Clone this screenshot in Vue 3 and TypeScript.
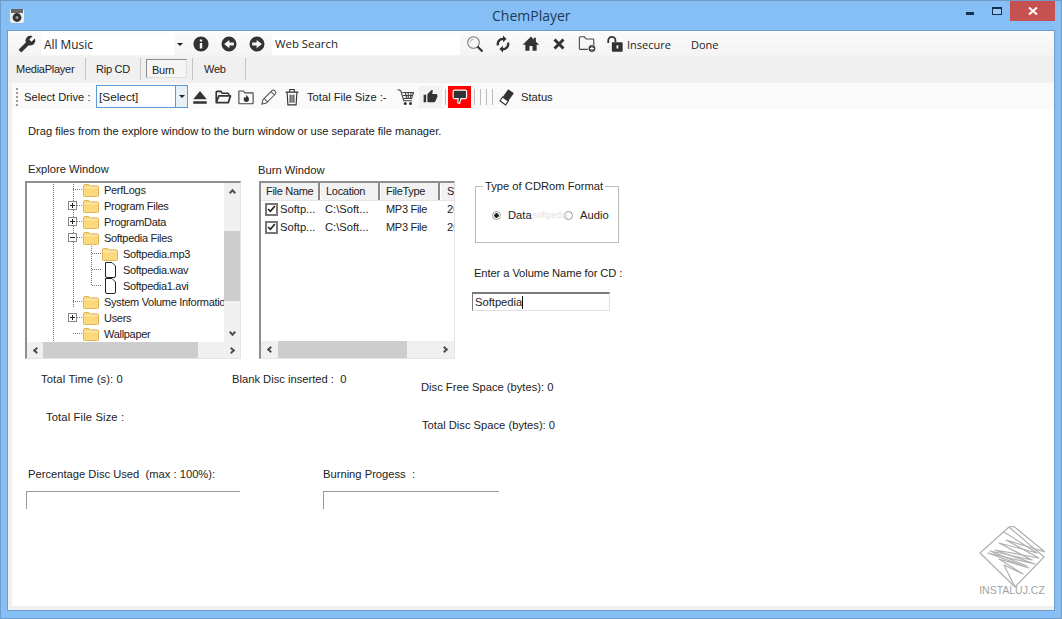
<script setup lang="ts">
const tree = [
  { label: 'PerfLogs', level: 1, icon: 'folder', exp: '' },
  { label: 'Program Files', level: 1, icon: 'folder', exp: '+' },
  { label: 'ProgramData', level: 1, icon: 'folder', exp: '+' },
  { label: 'Softpedia Files', level: 1, icon: 'folder', exp: '-' },
  { label: 'Softpedia.mp3', level: 2, icon: 'folder', exp: '' },
  { label: 'Softpedia.wav', level: 2, icon: 'file', exp: '' },
  { label: 'Softpedia1.avi', level: 2, icon: 'file', exp: '' },
  { label: 'System Volume Information', level: 1, icon: 'folder', exp: '' },
  { label: 'Users', level: 1, icon: 'folder', exp: '+' },
  { label: 'Wallpaper', level: 1, icon: 'folder', exp: '' }
]
const columns = ['File Name', 'Location', 'FileType', 'Si']
const files = [
  { name: 'Softp...', loc: 'C:\\Soft...', type: 'MP3 File', size: '20' },
  { name: 'Softp...', loc: 'C:\\Soft...', type: 'MP3 File', size: '20' }
]
</script>

<template>
  <div class="window">
    <header class="titlebar">
      <svg class="appicon" viewBox="0 0 16 16">
        <rect x="1" y="1" width="14" height="14" rx="2" fill="#eee" />
        <rect x="2" y="1" width="12" height="4" fill="#666" />
        <circle cx="8" cy="9.5" r="4.4" fill="#333" />
        <circle cx="8" cy="9.5" r="1.6" fill="#999" />
      </svg>
      <span class="title">ChemPlayer</span>
      <div class="winbtns">
        <span class="min"></span>
        <span class="max"></span>
        <span class="close">
          <svg viewBox="0 0 10 10" width="10" height="10"><path d="M1 1.500l8 7M9 1.500l-8 7" stroke="#fff" stroke-width="2" /></svg>
        </span>
      </div>
    </header>

    <main class="client">
      <div class="navbar">
        <svg class="ic wrench" viewBox="0 0 24 24"><path transform="matrix(-1 0 0 1 24 0)" d="M22.700 19l-9.100-9.100c.9-2.300.4-5-1.500-6.900-2-2-5-2.400-7.400-1.300L9 6 6 9 1.600 4.700C.4 7.100.9 10.100 2.900 12.100c1.900 1.900 4.600 2.400 6.900 1.500l9.100 9.100c.4.4 1 .4 1.400 0l2.300-2.300c.5-.4.5-1.100.1-1.400z" /></svg>
        <div class="navcombo"><span>All Music</span><i class="drop"></i></div>
        <svg class="ic nav-i" viewBox="0 0 24 24"><path d="M12 2C6.480 2 2 6.480 2 12s4.480 10 10 10 10-4.480 10-10S17.520 2 12 2zm1.600 16h-3.200v-7.500h3.200V18zm0-9.500h-3.200V6h3.200v2.500z" /></svg>
        <svg class="ic nav-i" viewBox="0 0 24 24"><path fill-rule="evenodd" d="M12 2a10 10 0 1 0 0 20 10 10 0 0 0 0-20zm.5 4.500v3.600h6v3.800h-6v3.600L5.500 12z" /></svg>
        <svg class="ic nav-i" viewBox="0 0 24 24"><path fill-rule="evenodd" d="M12 2a10 10 0 1 0 0 20 10 10 0 0 0 0-20zm-.5 4.500l7 5.500-7 5.500v-3.600h-6v-3.800h6z" /></svg>
        <div class="websearch">Web Search</div>
        <svg class="ic tool search" viewBox="0 0 18 18"><circle cx="7.500" cy="7.500" r="5.800" fill="none" stroke="#777" stroke-width="1.100" /><path d="M4.500 7a3 3 0 0 1 3-3" fill="none" stroke="#aaa" /><path d="M11.500 11.500l5 5" stroke="#333" stroke-width="2.200" /></svg>
        <svg class="ic tool" viewBox="0 0 24 24"><path d="M12 3.500a8.500 8.500 0 0 0-8.200 10.700l3-1A5.400 5.400 0 0 1 12 6.600V9.600l4.800-4.400L12 .8zM20.200 9.800l-3 1A5.400 5.400 0 0 1 12 17.400V14.400l-4.800 4.400 4.800 4.400V20.500A8.500 8.500 0 0 0 20.200 9.800z" /></svg>
        <svg class="ic tool" viewBox="0 0 24 24"><path d="M10 21v-6.500h4V21h5.500v-8H23L18.500 9V3.500h-3v2.800L12 2 1 13h3.500v8z" /></svg>
        <svg class="ic tool" viewBox="0 0 24 24"><path d="M6 6l12 12M18 6L6 18" stroke="#333" stroke-width="4" /></svg>
        <svg class="ic tool" viewBox="0 0 20 20"><path d="M11 16H2.500a1 1 0 0 1-1-1V3a1 1 0 0 1 1-1h4.500l2 2.500h7.500a1 1 0 0 1 1 1V11" fill="none" stroke="#444" stroke-width="1.200" /><circle cx="15.500" cy="15" r="3.800" fill="#444" /><path d="M15.500 12.800v4.400M13.300 15h4.400" stroke="#fff" stroke-width="1.200" /></svg>
        <svg class="ic tool" viewBox="0 0 20 20"><path d="M2.500 9V6a4 4 0 0 1 8 0v2" fill="none" stroke="#333" stroke-width="2" /><rect x="6.500" y="8" width="12" height="10.500" rx="1" fill="#333" /><rect x="11.700" y="11.500" width="2" height="3.500" fill="#fff" /></svg>
        <span class="insecure">Insecure</span>
        <span class="done">Done</span>
      </div>

      <div class="tabs">
        <span class="tab t1">MediaPlayer</span><i class="vsep"></i>
        <span class="tab t2">Rip CD</span><i class="vsep"></i>
        <span class="tab t3"><span class="active">Burn</span></span><i class="vsep"></i>
        <span class="tab t4">Web</span><i class="vsep"></i>
      </div>

      <div class="burnbar">
        <i class="grip"></i>
        <span class="sel-label">Select Drive :</span>
        <div class="drivecombo"><span>[Select]</span><b><i class="drop"></i></b></div>
        <svg class="ic b" viewBox="0 0 24 24"><path d="M3 17.500h18v3.500H3zM12 4l9 11H3z" /></svg>
        <svg class="ic b" viewBox="0 0 24 24"><path d="M3 19.500V5.500a1 1 0 0 1 1-1h5l2 2.500h7.500a1 1 0 0 1 1 1V10M3 19.500L6.500 10.500H22L19 19.500z" fill="none" stroke="#333" stroke-width="2.200" stroke-linejoin="round" /></svg>
        <svg class="ic b" viewBox="0 0 24 24"><path d="M2.500 20V5a1 1 0 0 1 1-1h5l2 2.500h10a1 1 0 0 1 1 1V20a1 1 0 0 1-1 1h-17a1 1 0 0 1-1-1z" fill="none" stroke="#444" stroke-width="1.500" /><path d="M13 9c.5 2.500 3 3 3 6a3.500 3.500 0 0 1-7 0c0-2 1-2.500 1.500-3.500.5 1 1 1.200 1.300 1.200C12.500 11.500 12.500 10 13 9z" fill="#333" /></svg>
        <svg class="ic b" viewBox="0 0 24 24"><path d="M2.500 21.500l1.500-6L16 3.500a2.500 2.500 0 0 1 3.500 0l1 1a2.500 2.500 0 0 1 0 3.500L8.500 20zM5.500 14l4.500 4.500M15 5l4.500 4.500M7.500 12L17 2.500" fill="none" stroke="#555" stroke-width="1.400" /></svg>
        <svg class="ic b" viewBox="0 0 24 24"><path d="M3.500 5.500h17M9 5V2h6v3M5.500 6l1 16.500h11l1-16.500M9.500 9v10.500M12 9v10.500M14.500 9v10.500" fill="none" stroke="#333" stroke-width="1.500" /></svg>
        <span class="size-label">Total File Size :-</span>
        <svg class="ic cart" viewBox="0 0 24 24"><path d="M1 2l4 1.500 4 13.500h11M7 6h15l-2.500 8H9M11 6l2 8M15 6v8M19 6l-1.500 8M8 10h13" fill="none" stroke="#444" stroke-width="1.500" /><circle cx="11" cy="20.500" r="2" fill="#333" /><circle cx="18" cy="20.500" r="2" fill="#333" /></svg>
        <span class="hover"><svg class="ic small" viewBox="0 0 24 24"><path d="M1 21h4V9H1v12zm22-11c0-1.100-.9-2-2-2h-6.310l.95-4.570.03-.32c0-.41-.17-.79-.44-1.060L14.170 1 7.590 7.590C7.220 7.950 7 8.450 7 9v10c0 1.100.9 2 2 2h9c.83 0 1.540-.5 1.840-1.220l3.020-7.050c.09-.23.14-.47.14-.73v-2z" /></svg></span>
        <i class="tsep first"></i>
        <span class="red"><svg class="ic redicon" viewBox="0 0 24 24"><path d="M5 3h15a2 2 0 0 1 2 2v8a2 2 0 0 1-2 2h-6l-2 7-2.500-1 .5-6H5a2 2 0 0 1-2-2V5a2 2 0 0 1 2-2z" fill="#333" stroke="#fff" stroke-width="1.600" /></svg></span>
        <i class="tsep"></i><i class="tsep"></i><i class="tsep"></i><i class="tsep"></i>
        <svg class="ic eraser" viewBox="0 0 24 24"><path d="M15 1.500l7.500 5.500-11 15.500-7.500-5.500z" fill="#333" /><path d="M7.500 12l7.500 5.500-3.500 5-7.500-5.500z" fill="#fff" stroke="#333" stroke-width="1.500" /></svg>
        <span class="status">Status</span>
      </div>

      <section class="content">
        <p class="hint">Drag files from the explore window to the burn window or use separate file manager.</p>

        <div class="panels">
          <div class="explore">
            <div class="plabel">Explore Window</div>
            <div class="box treebox">
              <div class="tree">
                <div v-for="row in tree" :key="row.label" class="node" :class="'lv' + row.level">
                  <span class="expander">
                    <i v-if="row.exp" class="exp"><em class="h"></em><em v-if="row.exp === '+'" class="v"></em></i>
                  </span>
                  <svg v-if="row.icon === 'folder'" class="nodeicon" viewBox="0 0 16 14"><path d="M.5 2.500A1 1 0 0 1 1.500 1.500H6L7.500 3h7a1 1 0 0 1 1 1v8.500a1 1 0 0 1-1 1h-13a1 1 0 0 1-1-1z" fill="#fcd97e" stroke="#e0b458" /><path d="M1 4.500h14" stroke="#fdebb5" /></svg>
                  <svg v-else class="nodeicon fileicon" viewBox="0 0 14 16"><path d="M2 .5h6.500L12 4v10a1.500 1.500 0 0 1-1.500 1.500h-7A1.500 1.500 0 0 1 2 14z" fill="#fff" stroke="#222" /></svg>
                  <span class="nodetext">{{ row.label }}</span>
                </div>
              </div>
              <div class="vbar">
                <span class="arrow up"></span>
                <span class="track"><span class="vthumb"></span></span>
                <span class="arrow down"></span>
              </div>
              <div class="hbar">
                <span class="arrow left"></span>
                <span class="track"><span class="hthumb tree-thumb"></span></span>
                <span class="arrow right"></span>
              </div>
            </div>
          </div>

          <div class="burn">
            <div class="plabel burnlabel">Burn Window</div>
            <div class="box listbox">
              <div class="lhead">
                <span v-for="c in columns" :key="c" class="lcol">{{ c }}</span>
              </div>
              <div class="lbody">
                <div v-for="(f, i) in files" :key="i" class="lrow">
                  <span class="check"><svg viewBox="0 0 12 12" width="10" height="10"><path d="M1.500 6l3 3 6-7" fill="none" stroke="#222" stroke-width="2.200" /></svg></span>
                  <span class="c-name">{{ f.name }}</span>
                  <span class="c-loc">{{ f.loc }}</span>
                  <span class="c-type">{{ f.type }}</span>
                  <span class="c-size">{{ f.size }}</span>
                </div>
              </div>
              <div class="hbar">
                <span class="arrow left"></span>
                <span class="track"><span class="hthumb list-thumb"></span></span>
                <span class="arrow right"></span>
              </div>
            </div>
          </div>

          <div class="options">
            <fieldset class="format">
              <legend>Type of CDRom Format</legend>
              <div class="radios">
                <span class="radio on"><i></i>Data</span>
                <span class="radio"><i></i>Audio</span>
              </div>
              <span class="softmark">softpedia</span>
            </fieldset>
            <div class="vol-label">Enter a Volume Name for CD :</div>
            <div class="vol-input">Softpedia<i class="caret"></i></div>
          </div>
        </div>

        <div class="stats">
          <div class="s-col a">
            <span class="l1">Total Time (s): 0</span>
            <span class="l2">Total File Size :</span>
          </div>
          <div class="s-col b2">
            <span>Blank Disc inserted :&nbsp; 0</span>
          </div>
          <div class="s-col c">
            <span>Disc Free Space (bytes): 0</span>
            <span class="l4">Total Disc Space (bytes): 0</span>
          </div>
        </div>

        <div class="progress">
          <div class="pg p1">
            <div class="pg-label">Percentage Disc Used&nbsp; (max : 100%):</div>
            <div class="bar"></div>
          </div>
          <div class="pg p2">
            <div class="pg-label">Burning Progess&nbsp; :</div>
            <div class="bar"></div>
          </div>
        </div>

        <div class="mark">
          <svg class="marksvg" viewBox="0 0 66 62" width="66" height="62">
            <g fill="none" stroke="#b0b0b0" stroke-width="1.200" stroke-linejoin="round">
              <path d="M30 1L65 31 36 61 1 27z" />
              <path d="M30 1l5 -0.500L66 26 27 14 60 32 16 24 56 38 9 27 50 42 20 33 44 48 25 39 36 61" />
              <path d="M25 6L58 27 20 17 53 34 11 25 48 40" />
            </g>
          </svg>
          <span>INSTALUJ.CZ</span>
        </div>
      </section>
    </main>
  </div>
</template>

<style>
html, body { margin: 0; background: #85bff6; overflow: hidden; }
</style>

<style scoped>
.window {
  width: 1062px; height: 619px; box-sizing: border-box;
  padding: 0 7px 8px;
  display: flex; flex-direction: column;
  background: #85bff6;
  border: 1px solid #6f9cc8;
  font: 11.2px "Liberation Sans", Arial, sans-serif;
  color: #222;
}
.titlebar { height: 30px; flex: none; display: flex; align-items: center; position: relative; }
.appicon { width: 16px; height: 16px; margin-left: 1px; margin-top: -1px; }
.title {
  position: absolute; left: 484px; top: 5px;
  font: 14px "Open Sans", sans-serif; color: #1d3b59;
}
.winbtns { margin-left: auto; display: flex; align-items: flex-start; align-self: flex-start; margin-right: -1px; }
.min { width: 8px; height: 3px; background: #12304e; margin-top: 11px; margin-right: 18px; }
.max { width: 10px; height: 8px; box-sizing: border-box; border: 1px solid #12304e; border-top-width: 2px; margin-top: 6px; margin-right: 8px; background: #9cc9f5; }
.close { width: 45px; height: 20px; background: #c75050; display: flex; align-items: center; justify-content: center; }

.client { flex: 1; display: flex; flex-direction: column; background: #f0f0f0; padding-bottom: 4px; min-height: 0; outline: 1px solid #6f9cc8; }
.ic { display: block; width: 18px; height: 18px; fill: #333; flex: none; }

.navbar { height: 26px; flex: none; display: flex; align-items: center; background: linear-gradient(#fbfbfb, #f3f3f3); font: 11.4px "Open Sans", sans-serif; }
.wrench { margin-left: 10px; }
.navcombo { width: 133px; height: 22px; margin-left: 5px; background: #fff; display: flex; align-items: center; padding-left: 3px; box-sizing: border-box; position: relative; font-size: 11.9px; }
.navcombo .drop { position: absolute; right: -9px; top: 10px; }
.drop { display: block; width: 0; height: 0; border: 3px solid transparent; border-top: 3px solid #222; border-bottom: 0; }
.nav-i { margin-left: 10px; }
.navcombo + .nav-i { margin-left: 18px; }
.websearch { width: 188px; height: 22px; margin-left: 6px; background: #fff; line-height: 21px; padding-left: 3px; box-sizing: border-box; }
.tool { margin-left: 10px; }
.search { margin-left: 6px; }
.insecure { margin-left: 3px; font-size: 11px; }
.done { margin-left: 20px; font-size: 11px; }

.tabs { height: 26px; flex: none; display: flex; align-items: center; background: #f0f0f0; font-size: 11px; letter-spacing: -.25px; }
.tab { display: block; flex: none; box-sizing: border-box; margin-top: -3px; }
.t1 { width: 77px; padding-left: 8px; }
.t2 { width: 54px; padding-left: 10px; }
.t3 { width: 51px; padding-left: 5px; }
.t4 { width: 52px; padding-left: 11px; }
.active { display: block; width: 41px; height: 19px; box-sizing: border-box; border: 1px solid #8c8c8c; border-right-color: #ddd; border-bottom-color: #ddd; background: #f5f5f5; padding-left: 5px; line-height: 20px; }
.vsep { display: block; width: 1px; height: 22px; background: #c4c4c4; margin-top: -3px; }

.burnbar { height: 26px; flex: none; box-sizing: border-box; padding-top: 1px; margin-left: 4px; display: flex; align-items: center; background: #fafafa; }
.grip { display: block; width: 2px; height: 18px; margin-left: 4px; background: repeating-linear-gradient(#999 0 2px, transparent 2px 4px); }
.sel-label { margin-left: 6px; width: 71px; flex: none; }
.drivecombo { width: 92px; height: 23px; margin-left: 1px; box-sizing: border-box; border: 1px solid #5a9bd5; background: #fff; display: flex; align-items: center; padding-left: 2px; justify-content: space-between; font-size: 11.8px; }
.drivecombo b { display: flex; align-items: center; justify-content: center; width: 11px; height: 21px; border-left: 1px solid #5a9bd5; background: #e6f0f9; }
.b { margin-left: 5px; }
.drivecombo + .b { margin-left: 3px; }
.size-label { margin-left: 6px; width: 82px; flex: none; white-space: nowrap; }
.cart { margin-left: 8px; }
.hover { display: flex; align-items: center; justify-content: center; width: 23px; height: 22px; background: #f2f2f2; margin-left: 4px; }
.small { width: 15px; height: 15px; }
.redicon { width: 17px; height: 17px; }
.tsep { display: block; width: 1px; height: 16px; background: #bbb; margin-left: 5px; flex: none; }
.tsep.first { margin-left: 3px; }
.red { display: flex; align-items: center; justify-content: center; width: 23px; height: 22px; background: #f00; margin-left: 2px; }
.red + .tsep { margin-left: 3px; }
.eraser { margin-left: 4px; }
.status { margin-left: 6px; }

.content { flex: 1; margin-left: 4px; background: #fff; position: relative; min-height: 0; }
.hint { margin: 15px 0 0 16px; line-height: 15px; letter-spacing: -.04px; }
.panels { display: flex; margin: 24px 0 0 13px; height: 197px; }
.plabel { margin: -2px 0 0 3px; line-height: 16px; height: 15px; }
.explore { width: 216px; }
.burn { width: 196px; margin-left: 18px; }
.burnlabel { margin: -1px 0 0 -1px; height: 14px; }
.box {
  margin-top: 5px; height: 178px; box-sizing: border-box; background: #fff;
  border: 2px solid #8f8f8f; border-right: 1px solid #e4e4e4; border-bottom: 1px solid #e4e4e4;
  position: relative; overflow: hidden;
}
.treebox { display: grid; grid-template-columns: 197px 17px; grid-template-rows: 159px 17px; }
.tree {
  overflow: hidden; margin-top: -1px;
  font-size: 11px; letter-spacing: -.3px;
  background-image:
    repeating-linear-gradient(#777 0 1px, transparent 1px 2px),
    repeating-linear-gradient(#777 0 1px, transparent 1px 2px),
    repeating-linear-gradient(#777 0 1px, transparent 1px 2px);
  background-size: 1px 100%, 1px 126px, 1px 40px;
  background-position: 26px 0, 46px 0, 64px 64px;
  background-repeat: no-repeat;
}
.node { height: 16px; display: flex; align-items: center; white-space: nowrap; }
.lv1 { padding-left: 41px; }
.lv2 { padding-left: 60px; }
.expander { display: block; width: 15px; height: 10px; position: relative; flex: none; background: repeating-linear-gradient(90deg, #777 0 1px, transparent 1px 2px) 5px 4px / 10px 1px no-repeat; }
.exp { position: absolute; left: 0; top: 0; width: 9px; height: 9px; border: 1px solid #888; box-sizing: border-box; background: #fff; }
.exp .h { position: absolute; left: 1px; top: 3px; width: 5px; height: 1px; background: #222; }
.exp .v { position: absolute; left: 3px; top: 1px; width: 1px; height: 5px; background: #222; }
.nodeicon { width: 16px; height: 14px; flex: none; }
.fileicon { width: 15px; height: 16px; margin-left: 1px; }
.nodetext { margin-left: 5px; }

.vbar { grid-column: 2; grid-row: 1; background: #f0f0f0; display: flex; flex-direction: column; }
.hbar { display: flex; height: 17px; background: #f0f0f0; align-items: stretch; }
.treebox .hbar { grid-column: 1 / 3; grid-row: 2; }
.listbox .hbar { position: absolute; left: 0; right: 0; bottom: 0; }
.track { flex: 1; display: flex; min-width: 0; min-height: 0; }
.vbar .track { flex-direction: column; padding-top: 31px; }
.vthumb { display: block; width: 100%; height: 70px; background: #cdcdcd; }
.hthumb { display: block; height: 100%; background: #cdcdcd; }
.tree-thumb { width: 155px; }
.list-thumb { width: 129px; }
.treebox .hbar .left { width: 16px; }
.arrow { display: block; flex: none; width: 17px; height: 17px; position: relative; }
.arrow::after { content: ""; position: absolute; left: 5px; top: 5px; width: 5px; height: 5px; border: solid #505050; border-width: 2px 0 0 2px; box-sizing: border-box; }
.up::after { transform: translate(1px, 2px) rotate(45deg); }
.down::after { transform: translate(1px, 0) rotate(225deg); }
.left::after { transform: translate(2px, 1px) rotate(-45deg); }
.right::after { transform: translate(0, 1px) rotate(135deg); }

.lhead { display: flex; height: 17px; border-bottom: 1px solid #e5e5e5; overflow: hidden; font-size: 11px; letter-spacing: -.3px; }
.lcol { flex: none; width: 59px; height: 17px; box-sizing: border-box; padding-left: 5px; line-height: 17px; border-right: 2px solid #8a8a8a; background: #f2f2f2; margin-right: 1px; white-space: nowrap; }
.lcol:last-child { border: 0; width: 20px; padding-left: 6px; }
.lbody { margin-top: -1px; }
.lrow { display: flex; height: 18px; align-items: center; }
.check { box-sizing: border-box; width: 13px; height: 13px; border: 2px solid #777; margin-left: 4px; display: flex; align-items: center; justify-content: center; flex: none; }
.c-name { margin-left: 2px; width: 45px; flex: none; }
.c-loc { width: 61px; flex: none; }
.c-type { width: 61px; flex: none; font-size: 11px; letter-spacing: -.3px; }
.c-size { flex: none; width: 9px; overflow: hidden; }

.options { margin-left: 17px; width: 160px; }
.format { margin: 17px 0 0 3px; padding: 0; width: 144px; min-width: 0; height: 63px; box-sizing: border-box; border: 1px solid #bbb; position: relative; }
.format legend { margin-left: 7px; padding: 0 2px; line-height: 13px; }
.radios { display: flex; margin: 15px 0 0 16px; }
.radio { display: flex; align-items: center; line-height: 14px; flex: none; width: 72px; }
.radio i { display: block; width: 9px; height: 9px; border: 1px solid #999; border-radius: 50%; margin-right: 7px; box-sizing: border-box; }
.radio.on i { background: radial-gradient(circle, #222 0 2px, #fff 2.5px); }
.softmark { position: absolute; left: 57px; top: 17px; font-size: 8.5px; color: #e2e2e2; }
.vol-label { margin: 23px 0 0 2px; line-height: 15px; white-space: nowrap; letter-spacing: -.1px; }
.vol-input { width: 138px; height: 19px; margin-top: 11px; box-sizing: border-box; border: 1px solid #e0e0e0; border-top: 2px solid #7a7a7a; border-left: 1px solid #7a7a7a; line-height: 15px; padding-left: 2px; display: flex; align-items: center; white-space: nowrap; }
.caret { display: block; width: 1px; height: 13px; background: #111; }

.stats { display: flex; height: 68px; margin-top: 12px; }
.s-col { display: flex; flex-direction: column; flex: none; line-height: 15px; }
.a { margin-left: 29px; width: 191px; letter-spacing: .14px; }
.a .l2 { margin-top: 23px; margin-left: 5px; }
.b2 { width: 189px; }
.c { padding-top: 8px; }
.c .l4 { margin-top: 23px; margin-left: 1px; }

.progress { display: flex; margin-top: 27px; }
.pg-label { line-height: 15px; margin-left: 2px; white-space: pre; }
.bar { margin-top: 9px; height: 18px; border-top: 1px solid #999; border-left: 1px solid #999; box-sizing: border-box; }
.p1 { margin-left: 14px; width: 214px; }
.p2 { margin-left: 83px; width: 176px; }
.p2 .pg-label { margin-left: 0; }

.mark { position: absolute; right: 9px; bottom: 10px; display: flex; flex-direction: column; align-items: center; color: #a3a3a3; font-size: 10.5px; line-height: 12px; }
.marksvg { margin-bottom: -4px; }
</style>
